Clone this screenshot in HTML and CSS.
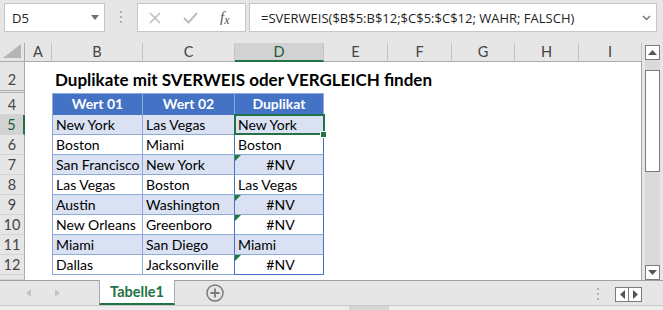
FILE: index.html
```html
<!DOCTYPE html>
<html lang="de">
<head>
    <meta charset="UTF-8">
    <title>Duplikate mit SVERWEIS</title>
    <link rel="stylesheet" href="styles.css">
</head>
<body>

    <div class="formula-bar">
        <div class="name-box">
            <span>D5</span>
            <svg width="8" height="5" viewBox="0 0 8 5"><path d="M0 0h8L4 5z" fill="#6f6f6f"/></svg>
        </div>
        <div class="grip">
            <svg width="3" height="13" viewBox="0 0 3 13"><rect x="0" y="0" width="2" height="2" fill="#b3b3b3"/><rect x="0" y="5" width="2" height="2" fill="#b3b3b3"/><rect x="0" y="10" width="2" height="2" fill="#b3b3b3"/></svg>
        </div>
        <div class="fx-box">
            <svg class="ico-x" width="12" height="12" viewBox="0 0 12 12"><path d="M1 1l10 10M11 1L1 11" stroke="#bdbdbd" stroke-width="1.5"/></svg>
            <svg class="ico-check" width="15" height="12" viewBox="0 0 15 12"><path d="M1 6l4.5 4.5L14 1" stroke="#bdbdbd" stroke-width="2" fill="none"/></svg>
            <span class="fx">f<span class="fx-sub">x</span></span>
        </div>
        <div class="formula-input">
            <span>=SVERWEIS($B$5:B$12;$C$5:$C$12; WAHR; FALSCH)</span>
            <svg width="9" height="6" viewBox="0 0 9 6"><path d="M1 1l3.5 3.5L8 1" stroke="#777" stroke-width="1.5" fill="none"/></svg>
        </div>
    </div>

    <div class="workspace">
        <div class="sheet">
            <!-- column headers -->
            <div class="corner"><svg width="18" height="14" viewBox="0 0 18 14"><path d="M18 0v14H0z" fill="#b5b5b5"/></svg></div>
            <div class="ch">A</div>
            <div class="ch">B</div>
            <div class="ch">C</div>
            <div class="ch sel">D</div>
            <div class="ch">E</div>
            <div class="ch">F</div>
            <div class="ch">G</div>
            <div class="ch">H</div>
            <div class="ch">I</div>

            <!-- row 2 -->
            <div class="rh hidden-next">2</div>
            <div class="c"></div>
            <div class="title">Duplikate mit SVERWEIS oder VERGLEICH finden</div>

            <!-- row 4 -->
            <div class="rh">4</div>
            <div class="c"></div>
            <div class="th first">Wert 01</div>
            <div class="th">Wert 02</div>
            <div class="th">Duplikat</div>
            <div class="c rest"></div>

            <div class="rh sel">5</div>
            <div class="c"></div>
            <div class="t first alt">New York</div>
            <div class="t alt">Las Vegas</div>
            <div class="t alt d active">New York<span class="handle"></span></div>
            <div class="c rest"></div>

            <div class="rh">6</div>
            <div class="c"></div>
            <div class="t first">Boston</div>
            <div class="t">Miami</div>
            <div class="t d">Boston</div>
            <div class="c rest"></div>

            <div class="rh">7</div>
            <div class="c"></div>
            <div class="t first alt">San Francisco</div>
            <div class="t alt">New York</div>
            <div class="t alt d err">#NV</div>
            <div class="c rest"></div>

            <div class="rh">8</div>
            <div class="c"></div>
            <div class="t first">Las Vegas</div>
            <div class="t">Boston</div>
            <div class="t d">Las Vegas</div>
            <div class="c rest"></div>

            <div class="rh">9</div>
            <div class="c"></div>
            <div class="t first alt">Austin</div>
            <div class="t alt">Washington</div>
            <div class="t alt d err">#NV</div>
            <div class="c rest"></div>

            <div class="rh">10</div>
            <div class="c"></div>
            <div class="t first">New Orleans</div>
            <div class="t">Greenboro</div>
            <div class="t d err">#NV</div>
            <div class="c rest"></div>

            <div class="rh">11</div>
            <div class="c"></div>
            <div class="t first alt">Miami</div>
            <div class="t alt">San Diego</div>
            <div class="t alt d">Miami</div>
            <div class="c rest"></div>

            <div class="rh">12</div>
            <div class="c"></div>
            <div class="t first last">Dallas</div>
            <div class="t last">Jacksonville</div>
            <div class="t d last err">#NV</div>
            <div class="c rest"></div>

            <div class="rh"></div>
            <div class="c full"></div>
        </div>

        <div class="vscroll">
            <div class="sbtn"><svg width="9" height="5" viewBox="0 0 9 5"><path d="M0 5h9L4.5 0z" fill="#555"/></svg></div>
            <div class="track"><div class="thumb"></div></div>
            <div class="sbtn"><svg width="9" height="5" viewBox="0 0 9 5"><path d="M0 0h9L4.5 5z" fill="#555"/></svg></div>
        </div>
    </div>

    <div class="tabbar">
        <div class="tab-nav">
            <svg width="5" height="8" viewBox="0 0 5 8"><path d="M5 0v8L0 4z" fill="#c4c4c4"/></svg>
            <svg width="5" height="8" viewBox="0 0 5 8"><path d="M0 0v8l5-4z" fill="#c4c4c4"/></svg>
        </div>
        <div class="tab">Tabelle1</div>
        <div class="add-sheet">
            <svg width="18" height="18" viewBox="0 0 18 18"><circle cx="9" cy="9" r="8" fill="none" stroke="#7a7a7a" stroke-width="1.5"/><path d="M9 4.5v9M4.5 9h9" stroke="#7a7a7a" stroke-width="1.8"/></svg>
        </div>
        <div class="spacer"></div>
        <svg class="hgrip" width="3" height="12" viewBox="0 0 3 12"><rect x="0" y="0" width="2" height="2" fill="#b3b3b3"/><rect x="0" y="5" width="2" height="2" fill="#b3b3b3"/><rect x="0" y="10" width="2" height="2" fill="#b3b3b3"/></svg>
        <div class="hbtns">
            <div class="hbtn"><svg width="5" height="9" viewBox="0 0 5 9"><path d="M5 0v9L0 4.5z" fill="#555"/></svg></div>
            <div class="hbtn"><svg width="5" height="9" viewBox="0 0 5 9"><path d="M0 0v9l5-4.5z" fill="#555"/></svg></div>
        </div>
    </div>
    <div class="statusline"><div class="hthumb"></div></div>

</body>
</html>
```

FILE: styles.css
```css
* {
    box-sizing: border-box;
}

body {
    margin: 0;
    width: 663px;
    height: 310px;
    overflow: hidden;
    background-color: #e6e6e6;
    font-family: Lato, "Liberation Sans", sans-serif;
    color: #000;
}

/* formula bar */

.formula-bar {
    display: flex;
    align-items: flex-start;
    height: 43px;
    padding: 3px 6px 0 4px;
}

.name-box,
.fx-box,
.formula-input {
    height: 29px;
    background-color: #fff;
    border: 1px solid #c6c6c6;
    display: flex;
    align-items: center;
}

.name-box {
    width: 101px;
    justify-content: space-between;
    padding: 0 5px 0 7px;
    font-family: "Open Sans", sans-serif;
    font-size: 13px;
    color: #222;
}

.grip {
    width: 32px;
    height: 29px;
    display: flex;
    align-items: center;
    justify-content: center;
}

.fx-box {
    width: 109px;
    padding-left: 11px;
}

.ico-check {
    margin-left: 22px;
}

.fx {
    margin-left: 22px;
    font-family: "Liberation Serif", serif;
    font-style: italic;
    font-size: 15px;
    color: #555;
}

.fx-sub {
    font-size: 12px;
    position: relative;
    top: 2px;
}

.formula-input {
    flex: 1;
    margin-left: 3px;
    padding: 0 5px 0 11px;
    justify-content: space-between;
    font-family: "Open Sans", sans-serif;
    font-size: 13px;
    color: #222;
}

/* sheet */

.workspace {
    display: flex;
    height: 237px;
}

.sheet {
    width: 642px;
    display: grid;
    grid-template-columns: 25px 27px 91px 92px 89px 64px 64px 63px 64px 63px;
    grid-template-rows: 19px 31px 22px repeat(8, 20px) 5px;
    background-color: #fff;
    border-right: 1px solid #a6a6a6;
    font-size: 14px;
}

.corner {
    background-color: #e6e6e6;
    border-right: 1px solid #ababab;
    border-bottom: 1px solid #ababab;
    display: flex;
    align-items: flex-end;
    justify-content: flex-end;
    padding: 0 3px 3px 0;
}

.ch {
    background-color: #e6e6e6;
    border-right: 1px solid #c4c4c4;
    border-bottom: 1px solid #ababab;
    text-align: center;
    line-height: 18px;
    font-size: 14.5px;
    color: #444;
}

.ch.sel {
    background-color: #d2d2d2;
    border-bottom: 2px solid #217346;
    color: #1e5a32;
}

.rh {
    grid-column: 1;
    background-color: #e6e6e6;
    border-right: 1px solid #ababab;
    border-bottom: 1px solid #d4d4d4;
    display: flex;
    align-items: flex-end;
    justify-content: center;
    padding-bottom: 1px;
    font-size: 14.5px;
    color: #444;
}

.rh.hidden-next {
    border-bottom: 3px double #ababab;
    padding-bottom: 2px;
}

.rh.sel {
    background-color: #d2d2d2;
    border-right: 2px solid #217346;
    color: #1e5a32;
}

.c.rest {
    grid-column: span 5;
}

.c.full {
    grid-column: 2 / -1;
}

.title {
    grid-column: 3 / -1;
    padding: 0 0 3px 3px;
    display: flex;
    align-items: flex-end;
    font-size: 17px;
    font-weight: bold;
    white-space: nowrap;
}

.th {
    background-color: #4472c4;
    border-right: 1px solid #8eaadb;
    border-top: 1px solid #8eaadb;
    color: #fff;
    font-weight: bold;
    text-align: center;
    line-height: 20px;
}

.th.first,
.t.first {
    border-left: 1px solid #8eaadb;
}

.t {
    position: relative;
    border-right: 1px solid #8eaadb;
    border-bottom: 1px solid #8eaadb;
    padding-left: 3px;
    line-height: 20px;
    white-space: nowrap;
}

.t.alt {
    background-color: #d9e1f2;
}

.t.d {
    border-left: 1px solid #4472c4;
    border-right: 1px solid #4472c4;
    margin-left: -1px;
}

.t.d.last {
    border-bottom: 1px solid #4472c4;
}

.t.err {
    text-align: center;
}

.t.err::before {
    content: "";
    position: absolute;
    top: 0;
    left: 0;
    border-top: 6px solid #1f7a3a;
    border-right: 6px solid transparent;
}

.t.active::after {
    content: "";
    position: absolute;
    top: -1px;
    left: -1px;
    right: -2px;
    bottom: -1px;
    border: 2px solid #217346;
}

.handle {
    position: absolute;
    right: -4px;
    bottom: -4px;
    width: 7px;
    height: 7px;
    background-color: #217346;
    border: 1px solid #fff;
    z-index: 2;
}

/* vertical scrollbar */

.vscroll {
    width: 21px;
    padding: 2px 3px 0 3px;
    display: flex;
    flex-direction: column;
}

.sbtn {
    height: 15px;
    background-color: #fff;
    border: 1px solid #7b7b7b;
    display: flex;
    align-items: center;
    justify-content: center;
}

.track {
    flex: 1;
    background-color: #dadada;
    padding-top: 10px;
}

.thumb {
    height: 102px;
    background-color: #fff;
    border: 1px solid #7b7b7b;
}

/* sheet tabs */

.tabbar {
    display: flex;
    align-items: flex-start;
    height: 25px;
    border-top: 1px solid #a0a0a0;
}

.tab-nav {
    width: 99px;
    height: 24px;
    display: flex;
    align-items: center;
    padding-left: 26px;
    gap: 24px;
}

.tab {
    width: 76px;
    height: 25px;
    margin-top: -1px;
    background-color: #fff;
    border-left: 1px solid #ababab;
    border-right: 1px solid #ababab;
    border-bottom: 2px solid #217346;
    color: #217346;
    font-weight: bold;
    font-size: 14.5px;
    text-align: center;
    line-height: 23px;
}

.add-sheet {
    height: 24px;
    display: flex;
    align-items: center;
    margin-left: 31px;
}

.spacer {
    flex: 1;
}

.hgrip {
    margin-top: 7px;
}

.hbtns {
    display: flex;
    margin: 6px 21px 0 15px;
}

.hbtn {
    width: 14px;
    height: 15px;
    background-color: #fff;
    border: 1px solid #7b7b7b;
    display: flex;
    align-items: center;
    justify-content: center;
}

.hbtn + .hbtn {
    margin-left: -1px;
}

.statusline {
    height: 5px;
    border-top: 1px solid #c8c8c8;
    background-color: #ececec;
    padding-left: 349px;
}

.hthumb {
    width: 40px;
    height: 4px;
    background-color: #d6d6d6;
}
```
